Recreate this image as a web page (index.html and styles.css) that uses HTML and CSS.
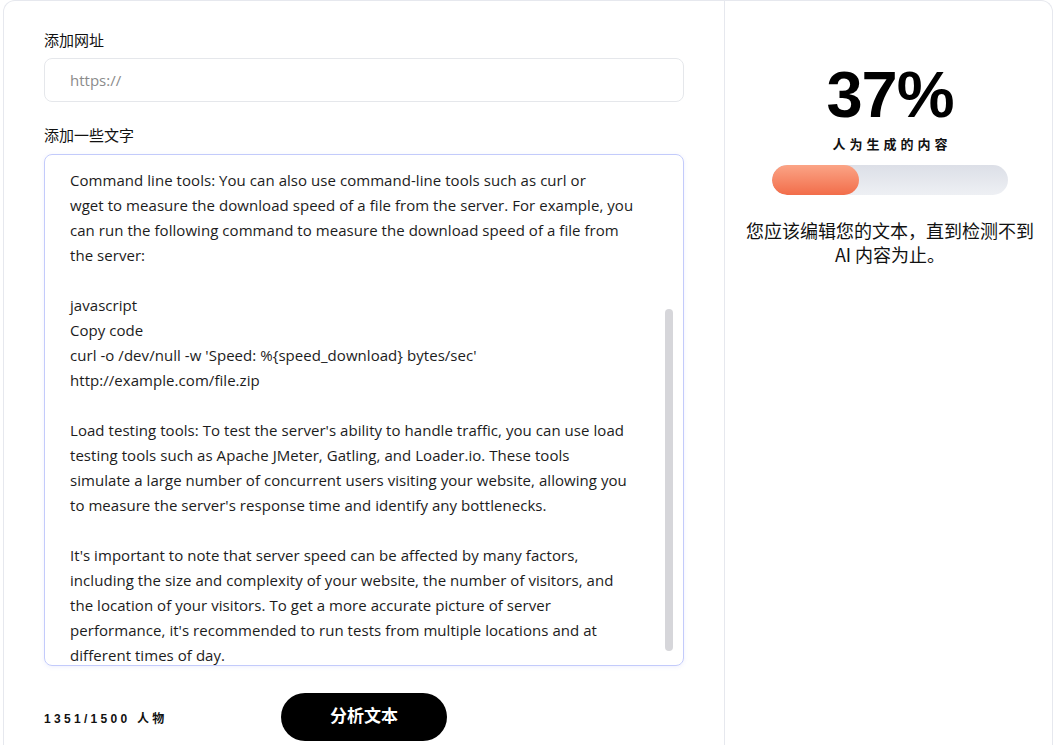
FILE: index.html
```html
<!DOCTYPE html>
<html lang="zh">
<head>
<meta charset="utf-8">
<title>AI 检测</title>
<link rel="stylesheet" href="styles.css">
</head>
<body>
<div class="frame">
  <section class="editor">
    <label class="label">添加网址</label>
    <div class="url-input"><span class="placeholder">https://</span></div>
    <label class="label label-text">添加一些文字</label>
    <div class="textbox">
      <div class="text">
        <div class="ln">Command line tools: You can also use command-line tools such as curl or</div>
        <div class="ln">wget to measure the download speed of a file from the server. For example, you</div>
        <div class="ln">can run the following command to measure the download speed of a file from</div>
        <div class="ln">the server:</div>
        <div class="ln">&nbsp;</div>
        <div class="ln">javascript</div>
        <div class="ln">Copy code</div>
        <div class="ln">curl -o /dev/null -w 'Speed: %{speed_download} bytes/sec'</div>
        <div class="ln">http://example.com/file.zip</div>
        <div class="ln">&nbsp;</div>
        <div class="ln">Load testing tools: To test the server's ability to handle traffic, you can use load</div>
        <div class="ln">testing tools such as Apache JMeter, Gatling, and Loader.io. These tools</div>
        <div class="ln">simulate a large number of concurrent users visiting your website, allowing you</div>
        <div class="ln">to measure the server's response time and identify any bottlenecks.</div>
        <div class="ln">&nbsp;</div>
        <div class="ln">It's important to note that server speed can be affected by many factors,</div>
        <div class="ln">including the size and complexity of your website, the number of visitors, and</div>
        <div class="ln">the location of your visitors. To get a more accurate picture of server</div>
        <div class="ln">performance, it's recommended to run tests from multiple locations and at</div>
        <div class="ln">different times of day.</div>
      </div>
      <div class="thumb"></div>
    </div>
    <div class="footer">
      <span class="count">1351/1500 人物</span>
      <button class="analyze">分析文本</button>
    </div>
  </section>
  <aside class="result">
    <div class="percent">37%</div>
    <div class="caption">人为生成的内容</div>
    <div class="bar"><div class="fill" style="width:37%"></div></div>
    <p class="advice">您应该编辑您的文本，直到检测不到<br>AI 内容为止。</p>
  </aside>
</div>
</body>
</html>
```

FILE: styles.css
```css
* { box-sizing: border-box; }
html, body { margin: 0; padding: 0; background: #fff; }
body {
  padding-left: 3px;
  font-family: "Open Sans", "Noto Sans CJK SC", sans-serif;
  color: #111;
  overflow: hidden;
  height: 745px;
}
.frame {
  display: flex;
  width: 1050px;
  height: 745px;
  border: 1px solid #e6e8ee;
  border-bottom: none;
  border-radius: 12px 12px 0 0;
  overflow: hidden;
}
.editor {
  width: 721px;
  flex: none;
  border-right: 1px solid #e6e8ee;
  padding: 29px 40px 0 40px;
  display: flex;
  flex-direction: column;
}
.label {
  display: block;
  font-family: "Noto Sans CJK SC", sans-serif;
  font-size: 15px;
  line-height: 20px;
  color: #111;
  margin-bottom: 8px;
}
.label-text { margin-top: 23px; margin-bottom: 9px; }
.url-input {
  height: 44px;
  flex: none;
  border: 1px solid #e5e7eb;
  border-radius: 8px;
  padding-left: 25px;
  display: flex;
  align-items: center;
}
.placeholder {
  font-size: 15px;
  color: #8b8b8b;
}
.textbox {
  position: relative;
  height: 512px;
  flex: none;
  border: 1px solid #c3cbfb;
  border-radius: 8px;
  box-shadow: 0 1px 4px rgba(120, 130, 240, 0.12);
  padding: 13px 25px 0 25px;
  overflow: hidden;
}
.ln {
  font-size: 15px;
  letter-spacing: 0.05px;
  line-height: 25px;
  white-space: nowrap;
  color: #1c1c1c;
}
.thumb {
  position: absolute;
  left: 620px;
  top: 154px;
  width: 8px;
  height: 342px;
  border-radius: 4px;
  background: #d6d6da;
}
.footer {
  display: flex;
  align-items: center;
  margin-top: 27px;
}
.count {
  font-family: "Liberation Sans", "Noto Sans CJK SC", sans-serif;
  font-size: 12px;
  font-weight: bold;
  letter-spacing: 3.3px;
  color: #111;
  width: 237px;
}
.analyze {
  width: 166px;
  height: 48px;
  border: none;
  border-radius: 24px;
  background: #000;
  color: #fff;
  font-family: "Noto Sans CJK SC", sans-serif;
  font-size: 17px;
  line-height: 20px;
  font-weight: bold;
  padding: 0 0 4px;
}
.result {
  flex: 1;
  display: flex;
  flex-direction: column;
  align-items: center;
  padding-top: 58px;
  padding-left: 3px;
}
.percent {
  font-family: "Liberation Sans", sans-serif;
  font-weight: bold;
  font-size: 65px;
  line-height: 72px;
  color: #000;
  letter-spacing: -1px;
}
.caption {
  margin-top: 4px;
  font-family: "Noto Sans CJK SC", sans-serif;
  font-weight: bold;
  font-size: 13px;
  line-height: 18px;
  letter-spacing: 4px;
  padding-left: 4px;
}
.bar {
  margin-top: 12px;
  width: 236px;
  height: 30px;
  border-radius: 15px;
  background: linear-gradient(#dcdfe7, #eef0f4);
  overflow: hidden;
}
.fill {
  height: 100%;
  border-radius: 15px;
  background: linear-gradient(#fba486, #f26d4a);
}
.advice {
  margin: 23px 0 0;
  font-family: "Noto Sans CJK SC", sans-serif;
  font-size: 18px;
  line-height: 24px;
  text-align: center;
  color: #111;
}
```
